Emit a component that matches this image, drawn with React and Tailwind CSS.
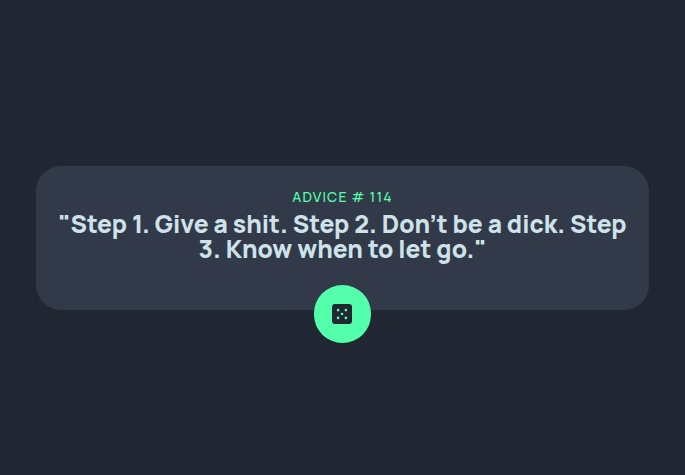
const pips = [[6.1, 6.1], [13.9, 6.1], [10, 10], [6.1, 13.9], [13.9, 13.9]];

function DiceIcon() {
  return (
    <svg width="20" height="20" viewBox="0 0 20 20" aria-hidden="true">
      <rect width="20" height="20" rx="3" fill="#202632" />
      {pips.map(([x, y]) => (
        <circle key={`${x}-${y}`} cx={x} cy={y} r="1.35" fill="#53ffab" />
      ))}
    </svg>
  );
}

export default function App() {
  return (
    <main className="flex h-screen items-center justify-center bg-[#202632] font-['Manrope','Inter',sans-serif]">
      <section className="relative mx-9 h-36 w-[613px] rounded-[25px] bg-[#323a49] px-4 pt-[23px] text-center">
        <p className="text-[14px] leading-4 font-medium tracking-[1.15px] text-[#53ffab]">ADVICE # 114</p>
        <h1 className="mt-1.5 text-[24.55px] leading-[25px] font-extrabold text-[#cee3e9]">
          "Step 1. Give a shit. Step 2. Don’t be a dick. Step 3. Know when to let go."
        </h1>
        <button className="absolute top-[119.5px] left-[277.5px] flex size-[57.5px] items-center justify-center rounded-full bg-[#53ffab]">
          <DiceIcon />
        </button>
      </section>
    </main>
  );
}
